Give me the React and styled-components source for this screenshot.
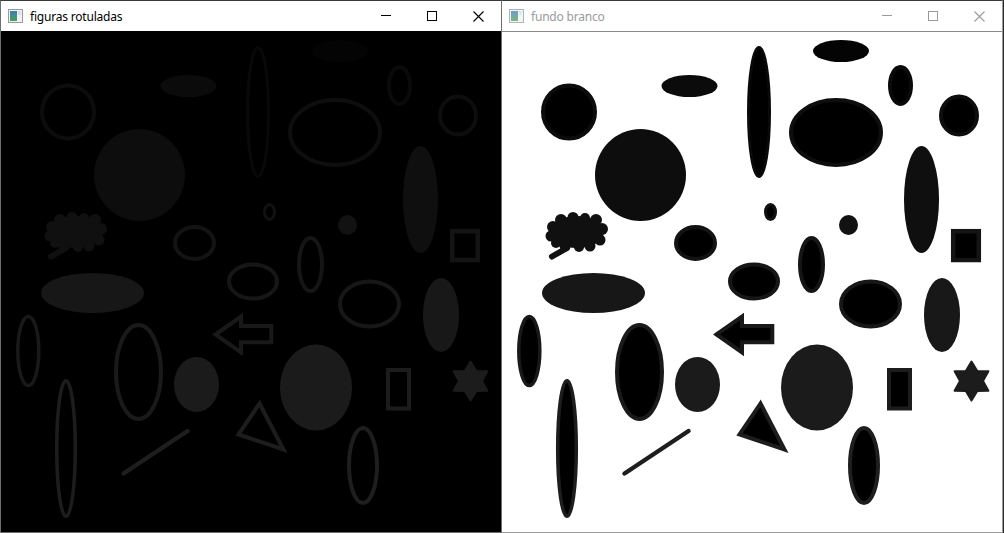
import styled, { createGlobalStyle } from 'styled-components';

const GlobalStyle = createGlobalStyle`
  html, body {
    margin: 0;
    padding: 0;
    background: #2b2b2b;
    overflow: hidden;
  }
`;

const Desktop = styled.div`
  display: flex;
  align-items: flex-start;
  width: 1004px;
  height: 533px;
`;

const Window = styled.div`
  display: flex;
  flex-direction: column;
  background: #fff;
  border: 1px solid ${(p) => (p.$active ? '#6e6e6e' : '#9a9a9a')};
  border-left-width: ${(p) => (p.$noLeft ? 0 : 1)}px;
  border-top-color: #3a3a3a;
`;

const TitleBar = styled.div`
  display: flex;
  align-items: center;
  height: 30px;
  background: #fff;
  border-bottom: 1px solid ${(p) => (p.$active ? '#000' : '#8a8a8a')};
  font-family: 'Noto Sans', 'Open Sans', sans-serif;
  font-size: 12px;
`;

const AppIcon = styled.svg`
  flex: none;
  margin: 0 7px 0 7px;
  opacity: ${(p) => (p.$active ? 1 : 0.75)};
`;

const Title = styled.span`
  flex: 1;
  color: ${(p) => (p.$active ? '#000' : '#9a9a9a')};
  letter-spacing: -0.2px;
  white-space: nowrap;
`;

const Controls = styled.div`
  display: flex;
  height: 100%;
`;

const ControlButton = styled.div`
  display: flex;
  align-items: center;
  justify-content: center;
  width: 46px;
  height: 100%;
  color: ${(p) => (p.$active ? '#000' : '#9a9a9a')};
`;

const Canvas = styled.svg`
  display: block;
  width: 500px;
  height: 500px;
  background: ${(p) => (p.$light ? '#fff' : '#000')};
`;

const starPoints = (cx, cy, R, r) => {
  const pts = [];
  for (let i = 0; i < 12; i++) {
    const a = ((-90 + i * 30) * Math.PI) / 180;
    const rad = i % 2 === 0 ? R : r;
    pts.push(`${(cx + rad * Math.cos(a)).toFixed(1)},${(cy + rad * Math.sin(a)).toFixed(1)}`);
  }
  return pts.join(' ');
};

// coordinates are screen pixels of the left window; viewBox maps them into each canvas
const shapes = [
  { t: 'ellipse', cx: 340, cy: 51, rx: 28, ry: 11, c: '#040404', fill: true },
  { t: 'ellipse', cx: 258, cy: 112, rx: 10.5, ry: 64.5, c: '#090909', w: 3 },
  { t: 'ellipse', cx: 399.5, cy: 85.5, rx: 10.5, ry: 18.5, c: '#0a0a0a', w: 4 },
  { t: 'ellipse', cx: 188.5, cy: 86, rx: 28, ry: 11, c: '#0b0b0b', fill: true },
  { t: 'ellipse', cx: 68, cy: 112, rx: 26, ry: 26.5, c: '#0c0c0c', w: 4 },
  { t: 'ellipse', cx: 458, cy: 115.5, rx: 18, ry: 19, c: '#0d0d0d', w: 4 },
  { t: 'ellipse', cx: 335, cy: 132.5, rx: 45, ry: 32.5, c: '#0e0e0e', w: 4 },
  { t: 'ellipse', cx: 139.5, cy: 175, rx: 45.5, ry: 46, c: '#0d0d0d', fill: true },
  { t: 'ellipse', cx: 420.5, cy: 199.5, rx: 17.5, ry: 53.5, c: '#0f0f0f', fill: true },
  { t: 'ellipse', cx: 269.5, cy: 212, rx: 5, ry: 7.5, c: '#111111', w: 3 },
  { t: 'cloud', c: '#101010', fill: true },
  { t: 'ellipse', cx: 347.5, cy: 225, rx: 9.5, ry: 10, c: '#121212', fill: true },
  { t: 'ellipse', cx: 194.5, cy: 243, rx: 19.5, ry: 16, c: '#131313', w: 4 },
  { t: 'rect', x: 452.2, y: 231.2, w: 25.6, h: 28.8, c: '#141414', w2: 4.5 },
  { t: 'ellipse', cx: 310.5, cy: 264.5, rx: 11.5, ry: 26.5, c: '#151515', w: 4 },
  { t: 'ellipse', cx: 253, cy: 281.5, rx: 24, ry: 17, c: '#161616', w: 4 },
  { t: 'ellipse', cx: 92.5, cy: 293, rx: 51.5, ry: 20, c: '#171717', fill: true },
  { t: 'ellipse', cx: 369.5, cy: 304, rx: 29.5, ry: 22.5, c: '#171717', w: 4 },
  { t: 'ellipse', cx: 441, cy: 315, rx: 18, ry: 37, c: '#181818', fill: true },
  { t: 'ellipse', cx: 28.3, cy: 351, rx: 10.5, ry: 34.5, c: '#191919', w: 3.5 },
  { t: 'poly', pts: '215.5,334.5 241,316.5 241,326 271.3,326 271.3,342.3 241,342.3 241,352.5', c: '#191919', w: 4 },
  { t: 'ellipse', cx: 138.5, cy: 372, rx: 22.5, ry: 47, c: '#1a1a1a', w: 4 },
  { t: 'ellipse', cx: 316, cy: 387.5, rx: 36, ry: 43, c: '#1b1b1b', fill: true },
  { t: 'ellipse', cx: 196.5, cy: 384.5, rx: 22.5, ry: 27.5, c: '#1b1b1b', fill: true },
  { t: 'poly', pts: starPoints(470.5, 381, 19.5, 11.5), c: '#1c1c1c', fill: true, w: 2 },
  { t: 'rect', x: 388, y: 370, w: 21, h: 38.5, c: '#1c1c1c', w2: 4 },
  { t: 'ellipse', cx: 66, cy: 448.5, rx: 9.3, ry: 67.8, c: '#1d1d1d', w: 3.5 },
  { t: 'poly', pts: '259.5,403.5 238.5,434.5 283.5,449.5', c: '#1d1d1d', w: 4 },
  { t: 'ellipse', cx: 363, cy: 465.5, rx: 14, ry: 37.5, c: '#1e1e1e', w: 4 },
  { t: 'line', x1: 123.5, y1: 473.5, x2: 187.5, y2: 431, c: '#1e1e1e', w: 4.5 },
];

// blob with scalloped edge, like a hand-drawn thought bubble
const Cloud = ({ color }) => (
  <g fill={color}>
    <ellipse cx="76" cy="232" rx="27" ry="16" />
    <circle cx="52" cy="227" r="6" />
    <circle cx="50" cy="236" r="5.5" />
    <circle cx="60" cy="220" r="6" />
    <circle cx="72" cy="217.5" r="5.5" />
    <circle cx="84" cy="218" r="5" />
    <circle cx="95" cy="220" r="6" />
    <circle cx="101" cy="229" r="6" />
    <circle cx="99" cy="240" r="5.5" />
    <circle cx="89" cy="246" r="5.5" />
    <circle cx="78" cy="247" r="5" />
    <circle cx="64" cy="246" r="5.5" />
    <circle cx="55" cy="243" r="5" />
    <line x1="51" y1="256.5" x2="66" y2="248" stroke={color} strokeWidth="6" strokeLinecap="round" />
  </g>
);

const Shape = ({ s, light }) => {
  const inner = s.fill ? s.c : light ? '#000' : 'none';
  const stroke = s.fill ? (s.w ? s.c : 'none') : s.c;
  const common = { fill: inner, stroke, strokeWidth: s.w || s.w2, strokeLinejoin: 'miter' };
  if (s.t === 'ellipse') return <ellipse cx={s.cx} cy={s.cy} rx={s.rx} ry={s.ry} {...common} />;
  if (s.t === 'rect') return <rect x={s.x} y={s.y} width={s.w} height={s.h} {...common} strokeWidth={s.w2} />;
  if (s.t === 'poly') return <polygon points={s.pts} {...common} strokeLinejoin={s.fill ? 'round' : 'miter'} />;
  if (s.t === 'line')
    return <line x1={s.x1} y1={s.y1} x2={s.x2} y2={s.y2} stroke={s.c} strokeWidth={s.w} strokeLinecap="round" />;
  if (s.t === 'cloud') return <Cloud color={s.c} />;
  return null;
};

const WindowIcon = ({ active }) => (
  <AppIcon $active={active} width="15" height="14" viewBox="0 0 15 14">
    <rect x="0.5" y="0.5" width="14" height="13" fill="#f2f2f2" stroke="#9a9a9a" />
    <defs>
      <linearGradient id={active ? 'gA' : 'gB'} x1="0" y1="0" x2="0" y2="1">
        <stop offset="0" stopColor="#3d7fb8" />
        <stop offset="1" stopColor="#4aa05a" />
      </linearGradient>
    </defs>
    <rect x="2" y="2" width="7" height="10" fill={`url(#${active ? 'gA' : 'gB'})`} />
    <rect x="10" y="2" width="3" height="4" fill="#cfe3f0" />
  </AppIcon>
);

const Caption = ({ active }) => (
  <Controls>
    <ControlButton $active={active}>
      <svg width="10" height="10" viewBox="0 0 10 10">
        <line x1="0" y1="4.5" x2="10" y2="4.5" stroke="currentColor" strokeWidth="1" />
      </svg>
    </ControlButton>
    <ControlButton $active={active}>
      <svg width="10" height="10" viewBox="0 0 10 10">
        <rect x="0.5" y="0.5" width="9" height="9" fill="none" stroke="currentColor" strokeWidth="1" />
      </svg>
    </ControlButton>
    <ControlButton $active={active}>
      <svg width="11" height="11" viewBox="0 0 11 11">
        <path d="M0.5 0.5 L10.5 10.5 M10.5 0.5 L0.5 10.5" stroke="currentColor" strokeWidth="1.1" />
      </svg>
    </ControlButton>
  </Controls>
);

const ImageWindow = ({ title, active, light, noLeft }) => (
  <Window $active={active} $noLeft={noLeft}>
    <TitleBar $active={active}>
      <WindowIcon active={active} />
      <Title $active={active}>{title}</Title>
      <Caption active={active} />
    </TitleBar>
    <Canvas $light={light} viewBox="1 32 500 500">
      {shapes.map((s, i) => (
        <Shape key={i} s={s} light={light} />
      ))}
    </Canvas>
  </Window>
);

export default function App() {
  return (
    <>
      <GlobalStyle />
      <Desktop>
        <ImageWindow title="figuras rotuladas" active />
        <ImageWindow title="fundo branco" light noLeft />
      </Desktop>
    </>
  );
}
